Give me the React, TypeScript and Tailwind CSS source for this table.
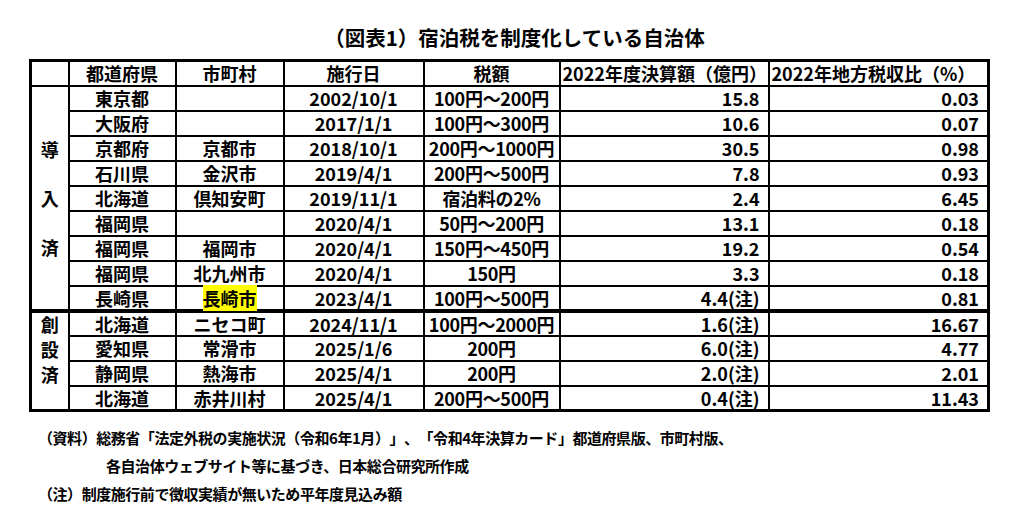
import React from 'react';

type Row = {
  pref: string;
  city: string;
  date: string;
  tax: string;
  amount: string;
  ratio: string;
  mark?: boolean;
};

const introduced: Row[] = [
  { pref: '東京都', city: '', date: '2002/10/1', tax: '100円～200円', amount: '15.8', ratio: '0.03' },
  { pref: '大阪府', city: '', date: '2017/1/1', tax: '100円～300円', amount: '10.6', ratio: '0.07' },
  { pref: '京都府', city: '京都市', date: '2018/10/1', tax: '200円～1000円', amount: '30.5', ratio: '0.98' },
  { pref: '石川県', city: '金沢市', date: '2019/4/1', tax: '200円～500円', amount: '7.8', ratio: '0.93' },
  { pref: '北海道', city: '倶知安町', date: '2019/11/1', tax: '宿泊料の2%', amount: '2.4', ratio: '6.45' },
  { pref: '福岡県', city: '', date: '2020/4/1', tax: '50円～200円', amount: '13.1', ratio: '0.18' },
  { pref: '福岡県', city: '福岡市', date: '2020/4/1', tax: '150円～450円', amount: '19.2', ratio: '0.54' },
  { pref: '福岡県', city: '北九州市', date: '2020/4/1', tax: '150円', amount: '3.3', ratio: '0.18' },
  { pref: '長崎県', city: '長崎市', date: '2023/4/1', tax: '100円～500円', amount: '4.4(注)', ratio: '0.81', mark: true },
];

const created: Row[] = [
  { pref: '北海道', city: 'ニセコ町', date: '2024/11/1', tax: '100円～2000円', amount: '1.6(注)', ratio: '16.67' },
  { pref: '愛知県', city: '常滑市', date: '2025/1/6', tax: '200円', amount: '6.0(注)', ratio: '4.77' },
  { pref: '静岡県', city: '熱海市', date: '2025/4/1', tax: '200円', amount: '2.0(注)', ratio: '2.01' },
  { pref: '北海道', city: '赤井川村', date: '2025/4/1', tax: '200円～500円', amount: '0.4(注)', ratio: '11.43' },
];

const cell = 'border-2 border-black px-1 whitespace-nowrap';

const DataCells = ({ r }: { r: Row }) => (
  <>
    <td className={`${cell} text-center`}>{r.pref}</td>
    <td className={`${cell} text-center`}>
      {r.mark ? <span className="bg-[#ffff00]">{r.city}</span> : r.city}
    </td>
    <td className={`${cell} text-center`}>{r.date}</td>
    <td className={`${cell} text-center px-0 tracking-[-0.3px]`}>{r.tax}</td>
    <td className={`${cell} text-right pr-2`}>{r.amount}</td>
    <td className={`${cell} text-right pr-2`}>{r.ratio}</td>
  </>
);

export default function App() {
  return (
    <div
      className="w-[1022px] h-[523px] bg-white text-black overflow-hidden [text-spacing-trim:space-all]"
      style={{ fontFamily: '"Noto Sans CJK JP", "Noto Sans", sans-serif' }}
    >
      {/* title */}
      <div className="pt-[24px] pl-[29px] w-[1000px] text-center text-[20.5px] font-bold leading-[26px]">
        （図表1）宿泊税を制度化している自治体
      </div>

      <table className="w-[958px] mt-[9px] ml-[29px] border-collapse border-[3px] border-black table-fixed text-[18px] font-semibold leading-none">
        <colgroup>
          <col className="w-[38px]" />
          <col className="w-[107px]" />
          <col className="w-[108px]" />
          <col className="w-[140px]" />
          <col className="w-[136px]" />
          <col className="w-[209px]" />
          <col className="w-[220px]" />
        </colgroup>
        <thead>
          <tr className="h-[25px]">
            <th className={cell}></th>
            <th className={`${cell} font-semibold`}>都道府県</th>
            <th className={`${cell} font-semibold`}>市町村</th>
            <th className={`${cell} font-semibold`}>施行日</th>
            <th className={`${cell} font-semibold`}>税額</th>
            <th className={`${cell} font-semibold text-left px-0 pl-[2px]`}>2022年度決算額（億円）</th>
            <th className={`${cell} font-semibold text-left px-0 pl-[2px]`}>2022年地方税収比（%）</th>
          </tr>
        </thead>
        <tbody>
          {introduced.map((r, i) => (
            <tr key={`a${i}`} className={`h-[25px] ${i === introduced.length - 1 ? 'border-b-[4px] border-black' : ''}`}>
              {i === 0 && (
                <td rowSpan={introduced.length} className="border-2 border-black text-center align-middle">
                  <div className="flex flex-col items-center gap-[31px]">
                    <span>導</span>
                    <span>入</span>
                    <span>済</span>
                  </div>
                </td>
              )}
              <DataCells r={r} />
            </tr>
          ))}
          {created.map((r, i) => (
            <tr key={`b${i}`} className="h-[25px]">
              {i === 0 && (
                <td rowSpan={created.length} className="border-2 border-black text-center align-top">
                  <div className="flex flex-col items-center pt-[2px] gap-[7px]">
                    <span>創</span>
                    <span>設</span>
                    <span>済</span>
                  </div>
                </td>
              )}
              <DataCells r={r} />
            </tr>
          ))}
        </tbody>
      </table>

      {/* notes */}
      <div className="mt-[12px] pl-[38px] text-[15px] font-semibold leading-[28px] tracking-[-0.45px]">
        <div>（資料）総務省「法定外税の実施状況（令和6年1月）」、「令和4年決算カード」都道府県版、市町村版、</div>
        <div className="pl-[68px]">各自治体ウェブサイト等に基づき、日本総合研究所作成</div>
        <div>（注）制度施行前で徴収実績が無いため平年度見込み額</div>
      </div>
    </div>
  );
}
